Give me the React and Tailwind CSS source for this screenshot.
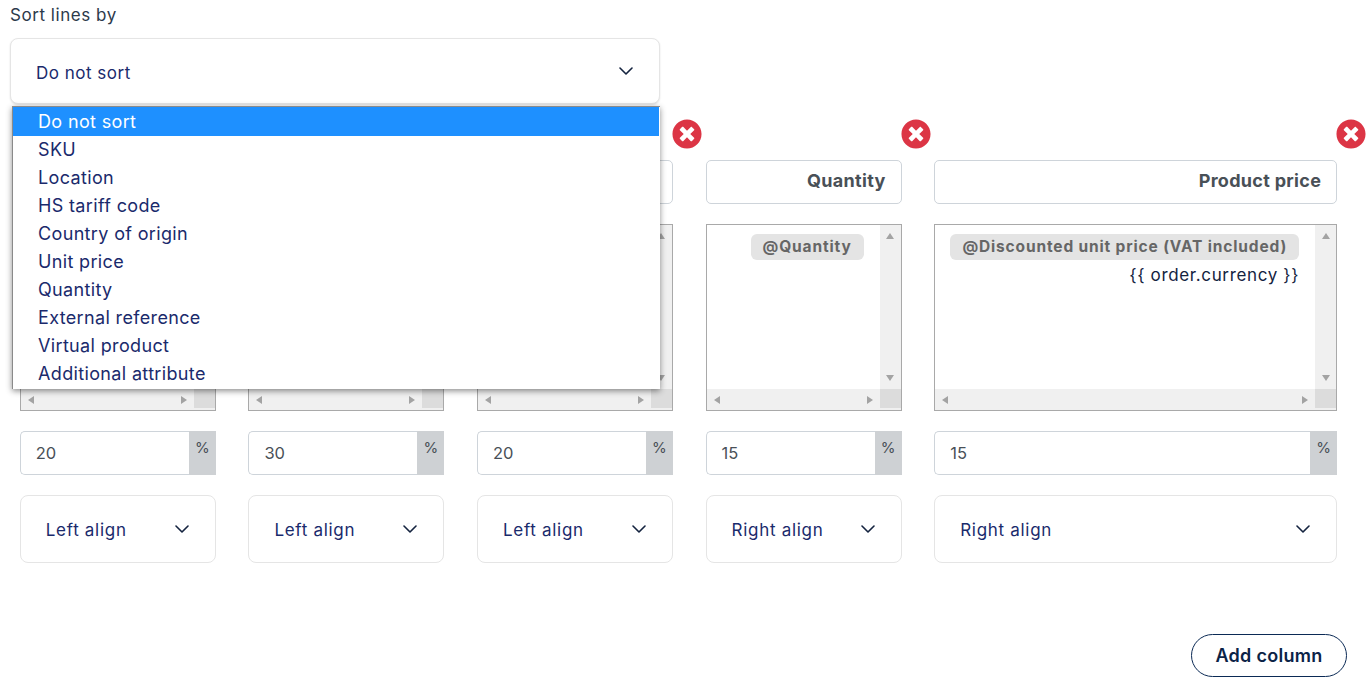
import React from 'react';
import { FaTimesCircle } from 'react-icons/fa';

const FONT = "font-['Inter','Noto_Sans',sans-serif]";

const OPTIONS = [
  'Do not sort',
  'SKU',
  'Location',
  'HS tariff code',
  'Country of origin',
  'Unit price',
  'Quantity',
  'External reference',
  'Virtual product',
  'Additional attribute',
];

const COLUMNS = [
  { width: 'w-[196px]', title: '', percent: '20', align: 'Left align', lines: [] },
  { width: 'w-[196px]', title: '', percent: '30', align: 'Left align', lines: [] },
  { width: 'w-[196px]', title: '', percent: '20', align: 'Left align', lines: [] },
  { width: 'w-[196px]', title: 'Quantity', percent: '15', align: 'Right align', chip: '@Quantity', lines: [] },
  { width: 'w-[403px]', title: 'Product price', percent: '15', align: 'Right align', chip: '@Discounted unit price (VAT included)', lines: ['{{ order.currency }}'] },
];

function Chevron() {
  return (
    <svg width="14" height="8" viewBox="0 0 14 8" fill="none" className="shrink-0">
      <path d="M1 1l6 6 6-6" stroke="#14233f" strokeWidth="1.6" strokeLinecap="round" strokeLinejoin="round" />
    </svg>
  );
}

function Arrow({ dir }) {
  const paths = { up: 'M4 1l4 6H0z', down: 'M4 7L0 1h8z', left: 'M1 4l6-4v8z', right: 'M7 4L1 0v8z' };
  return (
    <svg width="8" height="8" viewBox="0 0 8 8" className="shrink-0">
      <path d={paths[dir]} fill="#a3a3a3" />
    </svg>
  );
}

function Editor({ chip, lines }) {
  return (
    <div className="h-[187px] border border-[#a9a9a9] flex flex-col bg-white">
      <div className="flex-1 flex min-h-0">
        <div className="flex-1 min-w-0 pt-[9px] pr-[16px] pl-[14px] flex flex-col items-end text-[#14233f]">
          {chip && (
            <span className="bg-[#e4e4e4] rounded-[6px] h-[26px] leading-[26px] px-[12px] font-bold text-[#666666] text-[15.5px] whitespace-nowrap tracking-[0.85px]">
              {chip}
            </span>
          )}
          {lines.map(l => (
            <span key={l} className="whitespace-nowrap leading-[30px] text-[17px] tracking-[0.65px]">{l}</span>
          ))}
        </div>
        <div className="w-[21px] bg-[#f0f0f0] flex flex-col items-center justify-between py-[7px]">
          <Arrow dir="up" />
          <Arrow dir="down" />
        </div>
      </div>
      <div className="h-[21px] bg-[#f0f0f0] flex">
        <div className="flex-1 flex items-center justify-between px-[6px]">
          <Arrow dir="left" />
          <Arrow dir="right" />
        </div>
        <div className="w-[21px] h-[19px] bg-[#dcdcdc]" />
      </div>
    </div>
  );
}

function Column({ col }) {
  return (
    <div className={`${col.width} relative shrink-0 pt-[41px]`}>
      <FaTimesCircle size={30} className="absolute top-0 right-[-29px] text-[#dc3545]" />
      <div className="h-[44px] border border-[#ced4da] rounded-[5px] bg-white flex items-center justify-end px-[15px] pb-[3px] font-bold text-[#495057] text-[18px] tracking-[0.3px]">
        {col.title}
      </div>
      <div className="mt-[20px]">
        <Editor chip={col.chip} lines={col.lines} />
      </div>
      <div className="mt-[20px] flex h-[44px]">
        <div className="flex-1 min-w-0 border border-r-0 border-[#ced4da] rounded-l-[5px] bg-white flex items-center px-[15px] text-[16.5px] text-[#495057]">
          {col.percent}
        </div>
        <div className="w-[27px] bg-[#ced1d4] text-center text-[15px] leading-[34px] text-[#495057]">%</div>
      </div>
      <div className="mt-[20px] h-[68px] border border-[#e5e5e5] rounded-[8px] bg-white flex items-center justify-between pl-[25px] pr-[26px] text-[#1a2a6c] text-[17px]">
        <span className="pt-[4px] tracking-[0.7px]">{col.align}</span>
        <Chevron />
      </div>
    </div>
  );
}

export default function App() {
  return (
    <div className={`${FONT} relative w-[1368px] h-[691px] overflow-hidden bg-white`}>
      <div className="pl-[10px] pt-[4px] text-[17px] leading-[22px] tracking-[0.55px] text-[#2c3a4b]">Sort lines by</div>
      <div className="ml-[10px] mt-[12px] w-[650px] h-[66px] border border-[#e5e5e5] rounded-[8px] shadow-[0_1px_2px_rgba(0,0,0,0.12)] bg-white flex items-center justify-between pl-[25px] pr-[26px] text-[#1a2a6c] text-[17px]">
        <span className="pt-[6px] tracking-[0.5px]">Do not sort</span>
        <Chevron />
      </div>

      <div className="flex gap-[32.6px] pl-[19.8px] mt-[15px]">
        {COLUMNS.map((col, i) => <Column key={i} col={col} />)}
      </div>

      <div className="flex justify-end pr-[21px] mt-[71px]">
        <button className="w-[156px] h-[43px] rounded-full border border-[#0b2a55] bg-white text-[#0b2347] font-semibold text-[18px] tracking-[0.3px]">
          Add column
        </button>
      </div>

      <div className="absolute left-[12px] top-[106px] w-[648px] h-[283px] bg-white border-l border-t border-[#8a8a8a] shadow-[0_2px_6px_rgba(0,0,0,0.45)] text-[#1a2a6c] text-[18px] tracking-[0.35px]">
        {OPTIONS.map((opt, i) => (
          <div key={opt} className={i === 0 ? 'h-[29px] leading-[30px] pl-[25px] mr-[1px] bg-[#1e90ff] text-white' : 'h-[28px] leading-[28px] pl-[25px]'}>
            {opt}
          </div>
        ))}
      </div>
    </div>
  );
}
